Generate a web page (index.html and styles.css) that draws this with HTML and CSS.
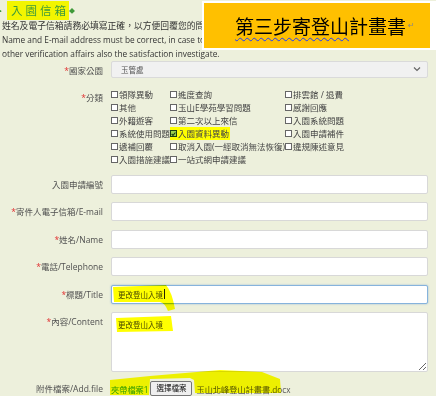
FILE: index.html
```html
<!DOCTYPE html>
<html lang="zh-Hant">
<head>
  <meta charset="UTF-8">
  <title>入園信箱</title>
  <link rel="stylesheet" href="styles.css">
</head>
<body>
  <h2 class="title"><span class="dot">•</span><span class="hl">入園信箱</span><span class="diamond">◆</span></h2>
  <p class="note">
    <span class="zh">姓名及電子信箱請務必填寫正確，以方便回覆您的問題</span>
    <span class="en">Name and E-mail address must be correct, in case to</span>
    <span class="en">other verification affairs also the satisfaction investigate.</span>
  </p>

  <div class="form">
    <label class="lbl"><i>*</i>國家公園</label>
    <div class="select">
      <span>玉管處</span>
      <svg width="8" height="6" viewBox="0 0 8 6"><path d="M1 1.5 L4 4.5 L7 1.5" fill="none" stroke="#666" stroke-width="1.2"/></svg>
    </div>

    <label class="lbl lbl-top"><i>*</i>分類</label>
    <div class="cats">
      <span class="cat"><b class="box"></b>領隊異動</span>
      <span class="cat"><b class="box"></b>進度查詢</span>
      <span class="cat"><b class="box"></b>排雲館 / 退費</span>
      <span class="cat"><b class="box"></b>其他</span>
      <span class="cat"><b class="box"></b>玉山E學苑學習問題</span>
      <span class="cat"><b class="box"></b>感謝回應</span>
      <span class="cat"><b class="box"></b>外籍遊客</span>
      <span class="cat"><b class="box"></b>第二次以上來信</span>
      <span class="cat"><b class="box"></b>入園系統問題</span>
      <span class="cat"><b class="box"></b>系統使用問題</span>
      <span class="cat hl"><b class="box on"><svg width="6" height="6" viewBox="0 0 6 6"><path d="M0.8 3 L2.4 4.6 L5.3 1.2" fill="none" stroke="#1b3d12" stroke-width="1.3"/></svg></b>入園資料異動</span>
      <span class="cat"><b class="box"></b>入園申請補件</span>
      <span class="cat"><b class="box"></b>遞補回覆</span>
      <span class="cat"><b class="box"></b>取消入園(一經取消無法恢復)</span>
      <span class="cat"><b class="box"></b>違規陳述意見</span>
      <span class="cat"><b class="box"></b>入園措施建議</span>
      <span class="cat"><b class="box"></b>一站式網申請建議</span>
    </div>

    <label class="lbl">入園申請編號</label>
    <input class="field" type="text">

    <label class="lbl"><i>*</i>寄件人電子信箱/E-mail</label>
    <input class="field" type="text">

    <label class="lbl"><i>*</i>姓名/Name</label>
    <input class="field" type="text">

    <label class="lbl"><i>*</i>電話/Telephone</label>
    <input class="field" type="text">

    <label class="lbl"><i>*</i>標題/Title</label>
    <div class="field focus">更改登山入境<span class="caret"></span></div>

    <label class="lbl"><i>*</i>內容/Content</label>
    <textarea class="field area">更改登山入境</textarea>

    <label class="lbl lbl-file">附件檔案/Add.file</label>
    <div class="file">
      <span class="pick">夾帶檔案1</span>
      <span class="btn">選擇檔案</span>
      <span class="fname">玉山北峰登山計畫書.docx</span>
    </div>
  </div>

  <div class="sticker"><span class="wavy">第三步寄登山</span>計畫書<span class="pilcrow">↵</span></div>

  <svg class="marker" width="436" height="396" viewBox="0 0 436 396">
    <path d="M113 287 L166 285 Q172 292 175 309 L168 311 Q165 303 160 302 L114 302 Z"/>
    <path d="M116 318 L171 316 L173 331 L117 332 Z"/>
    <path d="M110 380 L150 376 L220 370 L262 372 L280 379 L281 393 L195 393 L194 380 L190 378 L150 379 L149 395 L110 395 Z"/>
  </svg>
</body>
</html>
```

FILE: styles.css
```css
* {
    box-sizing: border-box;
}
html, body {
    margin: 0;
}
body {
    position: relative;
    width: 436px;
    height: 396px;
    overflow: hidden;
    background: #edf0dc;
    font-family: "Open Sans", "Noto Sans CJK TC", sans-serif;
    color: #444;
}
.title {
    margin: 0;
    height: 20px;
    display: flex;
    align-items: center;
    font-size: 11.5px;
    font-weight: 400;
    color: #3f9a3a;
}
.title .dot {
    width: 8px;
    font-size: 8px;
    margin-left: -1px;
}
.title .hl {
    background: #f2f500;
    padding: 1px 0 1px 4px;
    letter-spacing: 3px;
    line-height: 17px;
}
.title .diamond {
    font-size: 6px;
}
.note {
    margin: 0;
    padding-left: 2px;
    line-height: 13.3px;
    color: #333;
    white-space: nowrap;
}
.note span {
    display: block;
}
.note .zh {
    font-size: 8.8px;
}
.note .en {
    font-size: 8.3px;
}
.form {
    display: grid;
    grid-template-columns: 103px 317px;
    column-gap: 8px;
    row-gap: 8.5px;
    margin-top: 1px;
    font-size: 8.5px;
}
.lbl {
    text-align: right;
    line-height: 19px;
    color: #505050;
    white-space: nowrap;
}
.lbl i {
    font-style: normal;
    color: #e03030;
}
.lbl-top {
    line-height: 13px;
    padding-top: 3px;
}
.lbl-file {
    line-height: 16px;
}
.select {
    height: 17px;
    display: flex;
    align-items: center;
    justify-content: space-between;
    padding: 0 6px 0 9px;
    background: #f1f1f1;
    border: 1px solid #dadada;
    border-radius: 2px;
    font-size: 7.5px;
    color: #555;
}
.select + .lbl {
    line-height: 13px;
}
.cats {
    display: grid;
    grid-template-columns: repeat(3, max-content);
    line-height: 13px;
    color: #444;
}
.cat {
    display: flex;
    align-items: center;
    justify-self: start;
    white-space: nowrap;
}
.cat.hl {
    background: #ffff00;
    padding-right: 1px;
}
.box {
    width: 7px;
    height: 7px;
    margin-right: 1px;
    border: 1px solid #666;
    background: #fff;
    display: flex;
    align-items: center;
    justify-content: center;
}
.box.on {
    background: #9bd14a;
    border-color: #1b3d12;
}
.field {
    width: 100%;
    height: 19px;
    margin: 0;
    padding: 0 6px;
    background: #fff;
    border: 1px solid #d8d8d8;
    border-radius: 2px;
    font-family: "Open Sans", "Noto Sans CJK TC", sans-serif;
    font-size: 7.5px;
    color: #444;
    display: flex;
    align-items: center;
}
.field.focus {
    border-color: #86b3dc;
    box-shadow: 0 0 2px rgba(110, 160, 215, 0.7);
}
.caret {
    width: 1px;
    height: 10px;
    margin-left: 1px;
    background: #222;
}
.area {
    display: block;
    height: 60px;
    padding: 6px;
    resize: both;
}
.file {
    display: flex;
    align-items: center;
    height: 16px;
    font-size: 8.2px;
    color: #555;
}
.pick {
    color: #2f9a2f;
}
.btn {
    margin: 0 4px 0 2px;
    padding: 0 5px;
    height: 15px;
    line-height: 13px;
    border: 1px solid #767676;
    border-radius: 2px;
    background: #efefef;
    color: #111;
    font-size: 7.5px;
}
.sticker {
    position: absolute;
    left: 202px;
    top: 1px;
    width: 234px;
    height: 49px;
    display: flex;
    align-items: center;
    padding-left: 31px;
    background: #ffc000;
    border: 2px solid #fff;
    border-right-width: 6px;
    font-family: "Noto Sans CJK TC", serif;
    font-size: 19px;
    color: #000;
}
.wavy {
    text-decoration: underline wavy #1f3cff;
    text-decoration-thickness: 1px;
    text-underline-offset: 3px;
}
.pilcrow {
    font-family: "DejaVu Sans", sans-serif;
    font-size: 8px;
    color: #888;
    margin-left: 2px;
}
.marker {
    position: absolute;
    left: 0;
    top: 0;
    pointer-events: none;
    mix-blend-mode: multiply;
    fill: #ffff00;
}
```
